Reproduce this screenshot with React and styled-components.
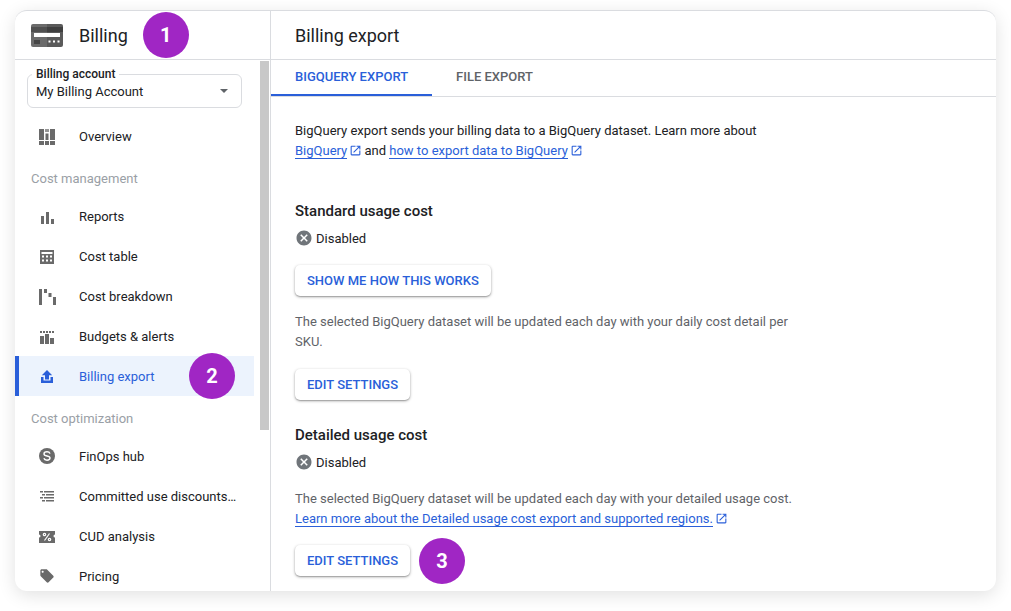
import React from "react";
import styled, { createGlobalStyle } from "styled-components";
import { MdCancel, MdOpenInNew, MdLocalOffer } from "react-icons/md";

const BLUE = "#2a5fd9";
const GRAY = "#5f6368";

const GlobalStyle = createGlobalStyle`
  html, body {
    margin: 0;
    padding: 0;
    background: #fff;
    font-family: Roboto, "Liberation Sans", sans-serif;
    color: #202124;
    overflow: hidden;
  }
`;

const IconBox = ({ color = "#6a6a6a", children }) => (
  <svg width="24" height="24" viewBox="0 0 24 24" fill={color}>
    {children}
  </svg>
);

const OverviewIcon = () => (
  <IconBox>
    <rect x="4" y="5" width="5" height="11" />
    <rect x="4" y="17" width="5" height="4" />
    <rect x="10" y="5" width="4" height="3" opacity=".7" />
    <rect x="10.5" y="9.5" width="3" height="6.5" />
    <rect x="10" y="17" width="4" height="4" />
    <rect x="15" y="5" width="5" height="11" />
    <rect x="15" y="17" width="5" height="4" />
  </IconBox>
);

const ReportsIcon = () => (
  <IconBox>
    <rect x="6" y="12" width="3" height="8" />
    <rect x="11" y="8" width="3" height="12" />
    <rect x="16" y="15" width="3" height="5" />
  </IconBox>
);

const TableIcon = () => (
  <IconBox>
    <path d="M5 6h14v14H5z" />
    <g fill="#fff">
      <rect x="6.5" y="8" width="11" height="2" />
      <rect x="7" y="11.5" width="2" height="2" />
      <rect x="11" y="11.5" width="2" height="2" />
      <rect x="15" y="11.5" width="2" height="2" />
      <rect x="7" y="15.5" width="2" height="2" />
      <rect x="11" y="15.5" width="2" height="2" />
      <rect x="15" y="15.5" width="2" height="2" />
    </g>
  </IconBox>
);

const BreakdownIcon = () => (
  <IconBox>
    <rect x="4" y="5" width="3" height="16" />
    <rect x="9" y="5" width="3" height="4" />
    <rect x="13.5" y="9" width="3" height="4" />
    <rect x="18" y="13" width="3" height="8" />
  </IconBox>
);

const BudgetsIcon = () => (
  <IconBox>
    <g>
      <rect x="5" y="7" width="2" height="2" />
      <rect x="8" y="7" width="2" height="2" />
      <rect x="11" y="7" width="2" height="2" />
      <rect x="14" y="7" width="2" height="2" />
      <rect x="17" y="7" width="2" height="2" />
    </g>
    <rect x="5" y="12" width="4" height="8" />
    <rect x="10" y="10" width="4" height="10" />
    <rect x="15" y="14" width="4" height="6" />
  </IconBox>
);

const UploadIcon = () => (
  <IconBox color={BLUE}>
    <path d="M12 6l-5.200 5.200h3.200v4.300h4v-4.300h3.200z" />
    <path d="M6 13h2.500v3.500h7V13H18v6H6z" />
  </IconBox>
);

const DollarIcon = () => (
  <IconBox>
    <circle cx="12" cy="12" r="8" />
    <path
      d="M15 9.600c-.4-1.200-1.500-1.800-3-1.800-1.600 0-3 .8-3 2.100 0 2.900 6 1.300 6 4.200 0 1.300-1.400 2.100-3 2.100-1.500 0-2.700-.7-3.100-1.900"
      fill="none"
      stroke="#fff"
      strokeWidth="1.400"
    />
  </IconBox>
);

const ListIcon = () => (
  <IconBox>
    <rect x="5" y="7" width="3" height="1.500" />
    <rect x="9" y="7" width="10" height="1.500" />
    <rect x="7" y="10" width="3" height="1.500" />
    <rect x="11" y="10" width="8" height="1.500" />
    <rect x="5" y="13" width="3" height="1.500" />
    <rect x="9" y="13" width="10" height="1.500" />
    <rect x="7" y="16" width="3" height="1.500" />
    <rect x="11" y="16" width="8" height="1.500" />
  </IconBox>
);

const PercentIcon = () => (
  <IconBox>
    <path d="M4 7h16v3.500a1.500 1.500 0 0 0 0 3V19H4v-5.500a1.500 1.500 0 0 0 0-3z" />
    <g fill="none" stroke="#fff" strokeWidth="1.200">
      <path d="M14.500 9.500l-5 7" />
      <circle cx="9.500" cy="10.500" r="1.200" />
      <circle cx="14.500" cy="15.500" r="1.200" />
    </g>
  </IconBox>
);

const BillingLogo = () => (
  <svg width="32" height="23" viewBox="0 0 32 23">
    <path d="M2 0h14v23H2a2 2 0 0 1-2-2V2a2 2 0 0 1 2-2z" fill="#6b6b6b" />
    <path d="M16 0h14a2 2 0 0 1 2 2v19a2 2 0 0 1-2 2H16z" fill="#5a5a5a" />
    <rect y="3" width="16" height="5" fill="#505050" />
    <rect x="16" y="3" width="16" height="5" fill="#3f3f3f" />
    <rect x="3" y="9" width="26" height="4" fill="#fff" />
    <rect x="3" y="16" width="6" height="4" fill="#454545" />
    <g fill="#fff">
      <rect x="17.500" y="16.500" width="2" height="2" />
      <rect x="22" y="16.500" width="2" height="2" />
      <rect x="26.500" y="16.500" width="2" height="2" />
    </g>
  </svg>
);

const App = () => {
  return (
    <>
      <GlobalStyle />
      <Page>
        <Card>
          <Sidebar>
            <SideHeader>
              <BillingLogo />
              <SideTitle>Billing</SideTitle>
              <Badge $left="15px">1</Badge>
            </SideHeader>
            <SideBody>
              <NavColumn>
                <AccountField>
                  <AccountLabel>Billing account</AccountLabel>
                  <AccountValue>My Billing Account</AccountValue>
                  <Caret />
                </AccountField>
                <NavRow>
                  <OverviewIcon />
                  <NavText>Overview</NavText>
                </NavRow>
                <NavGroup>Cost management</NavGroup>
                <NavRow>
                  <ReportsIcon />
                  <NavText>Reports</NavText>
                </NavRow>
                <NavRow>
                  <TableIcon />
                  <NavText>Cost table</NavText>
                </NavRow>
                <NavRow>
                  <BreakdownIcon />
                  <NavText>Cost breakdown</NavText>
                </NavRow>
                <NavRow>
                  <BudgetsIcon />
                  <NavText>Budgets &amp; alerts</NavText>
                </NavRow>
                <NavRow $active>
                  <UploadIcon />
                  <NavText>Billing export</NavText>
                  <Badge $left="auto" $right="19px">2</Badge>
                </NavRow>
                <NavGroup>Cost optimization</NavGroup>
                <NavRow>
                  <DollarIcon />
                  <NavText>FinOps hub</NavText>
                </NavRow>
                <NavRow>
                  <ListIcon />
                  <NavText>Committed use discounts…</NavText>
                </NavRow>
                <NavRow>
                  <PercentIcon />
                  <NavText>CUD analysis</NavText>
                </NavRow>
                <NavRow>
                  <TagSlot>
                    <MdLocalOffer />
                  </TagSlot>
                  <NavText>Pricing</NavText>
                </NavRow>
              </NavColumn>
              <ScrollTrack>
                <ScrollThumb />
              </ScrollTrack>
            </SideBody>
          </Sidebar>
          <Main>
            <MainHeader>Billing export</MainHeader>
            <Tabs>
              <Tab $active>BIGQUERY EXPORT</Tab>
              <Tab>FILE EXPORT</Tab>
            </Tabs>
            <Content>
              <Paragraph>
                BigQuery export sends your billing data to a BigQuery dataset. Learn more about{" "}
                <DocLink>BigQuery</DocLink>
                <MdOpenInNew />
                {" "}and <DocLink>how to export data to BigQuery</DocLink>
                <MdOpenInNew />
              </Paragraph>

              <SectionTitle $top="40px">Standard usage cost</SectionTitle>
              <Status>
                <MdCancel />
                Disabled
              </Status>
              <ActionRow $top="17px">
                <ActionButton>SHOW ME HOW THIS WORKS</ActionButton>
              </ActionRow>
              <Paragraph $top="16px" $muted>
                The selected BigQuery dataset will be updated each day with your daily cost detail per SKU.
              </Paragraph>
              <ActionRow $top="17px">
                <ActionButton>EDIT SETTINGS</ActionButton>
              </ActionRow>

              <SectionTitle $top="25px">Detailed usage cost</SectionTitle>
              <Status>
                <MdCancel />
                Disabled
              </Status>
              <Paragraph $top="17px" $muted>
                The selected BigQuery dataset will be updated each day with your detailed usage cost.{" "}
                <DocLink>Learn more about the Detailed usage cost export and supported regions.</DocLink>
                <MdOpenInNew />
              </Paragraph>
              <ActionRow $top="16px">
                <ActionButton>EDIT SETTINGS</ActionButton>
                <Badge $left="9px">3</Badge>
              </ActionRow>
            </Content>
          </Main>
        </Card>
      </Page>
    </>
  );
};

export default App;

const Page = styled.div`
  height: 611px;
  box-sizing: border-box;
  padding: 10px 15px 20px;
  overflow: hidden;
`;

const Card = styled.div`
  height: 581px;
  box-sizing: border-box;
  display: flex;
  background: #fff;
  border-top: 1px solid #dadce0;
  border-radius: 12px;
  box-shadow: 0 4px 18px rgba(0, 0, 0, 0.12);
  overflow: hidden;
`;

const Sidebar = styled.aside`
  width: 256px;
  flex-shrink: 0;
  box-sizing: border-box;
  display: flex;
  flex-direction: column;
  border-right: 1px solid #dadce0;
`;

const SideHeader = styled.div`
  height: 49px;
  flex-shrink: 0;
  box-sizing: border-box;
  display: flex;
  align-items: center;
  padding: 0 0 0 16px;
  border-bottom: 1px solid #dadce0;
`;

const SideTitle = styled.div`
  margin-left: 16px;
  font-size: 18px;
`;

const Badge = styled.div`
  width: 46px;
  height: 46px;
  flex-shrink: 0;
  display: flex;
  align-items: center;
  justify-content: center;
  margin-left: ${(p) => p.$left || "0"};
  margin-right: ${(p) => p.$right || "0"};
  border-radius: 50%;
  background: #a026c4;
  color: #fff;
  font-size: 20px;
  font-weight: 700;
`;

const SideBody = styled.div`
  flex: 1;
  min-height: 0;
  display: flex;
`;

const NavColumn = styled.nav`
  flex: 1;
  min-width: 0;
  padding-top: 14px;
`;

const AccountField = styled.div`
  position: relative;
  height: 34px;
  box-sizing: border-box;
  margin: 0 12px 8px;
  padding: 9px 0 0 8px;
  border: 1px solid #dadce0;
  border-radius: 6px;
`;

const AccountLabel = styled.span`
  position: absolute;
  top: -7px;
  left: 4px;
  padding: 0 4px;
  background: #fff;
  font-size: 12px;
  font-weight: 500;
  line-height: 13px;
`;

const AccountValue = styled.div`
  font-size: 13px;
  line-height: 15px;
`;

const Caret = styled.span`
  position: absolute;
  top: 14px;
  right: 13px;
  border-left: 4px solid transparent;
  border-right: 4px solid transparent;
  border-top: 4px solid ${GRAY};
`;

const NavRow = styled.div`
  height: 40px;
  box-sizing: border-box;
  display: flex;
  align-items: center;
  padding-left: ${(p) => (p.$active ? "16px" : "20px")};
  border-left: ${(p) => (p.$active ? `4px solid ${BLUE}` : "0")};
  background: ${(p) => (p.$active ? "#ecf3fd" : "transparent")};
  color: ${(p) => (p.$active ? BLUE : "#202124")};
`;

const TagSlot = styled.span`
  width: 24px;
  height: 24px;
  display: flex;
  align-items: center;
  justify-content: center;
  color: #6a6a6a;
  font-size: 16px;
`;

const NavText = styled.span`
  margin-left: 20px;
  font-size: 13px;
  white-space: nowrap;
`;

const NavGroup = styled.div`
  height: 40px;
  box-sizing: border-box;
  padding: 15px 0 0 16px;
  color: #9aa0a6;
  font-size: 13px;
  line-height: 15px;
`;

const ScrollTrack = styled.div`
  width: 16px;
  flex-shrink: 0;
  padding: 1px 0 0 6px;
  box-sizing: border-box;
`;

const ScrollThumb = styled.div`
  width: 9px;
  height: 369px;
  background: #c8c8c8;
`;

const Main = styled.main`
  flex: 1;
  min-width: 0;
  display: flex;
  flex-direction: column;
`;

const MainHeader = styled.div`
  height: 49px;
  flex-shrink: 0;
  box-sizing: border-box;
  display: flex;
  align-items: center;
  padding-left: 24px;
  border-bottom: 1px solid #dadce0;
  font-size: 18px;
`;

const Tabs = styled.div`
  height: 37px;
  flex-shrink: 0;
  box-sizing: border-box;
  display: flex;
  border-bottom: 1px solid #dadce0;
`;

const Tab = styled.div`
  height: 36px;
  box-sizing: border-box;
  display: flex;
  align-items: center;
  padding: 0 24px 1px;
  border-bottom: 2px solid ${(p) => (p.$active ? BLUE : "transparent")};
  color: ${(p) => (p.$active ? BLUE : GRAY)};
  font-size: 13px;
  font-weight: 500;
`;

const Content = styled.div`
  padding: 24px 0 0 24px;
`;

const Paragraph = styled.p`
  width: 510px;
  margin: ${(p) => p.$top || "0"} 0 0;
  color: ${(p) => (p.$muted ? "#5f6368" : "#202124")};
  font-size: 13px;
  line-height: 20px;

  svg {
    margin: 0 -1px 0 2px;
    color: ${BLUE};
    font-size: 13px;
    vertical-align: -2px;
  }
`;

const DocLink = styled.a`
  color: ${BLUE};
  border-bottom: 1px solid ${BLUE};
`;

const SectionTitle = styled.h3`
  margin: ${(p) => p.$top || "0"} 0 0;
  font-size: 15px;
  font-weight: 500;
  line-height: 20px;
`;

const Status = styled.div`
  display: flex;
  align-items: center;
  margin-top: 7px;
  height: 20px;
  font-size: 13px;

  svg {
    margin: 0 3px 0 0;
    color: #70757a;
    font-size: 18px;
  }
`;

const ActionRow = styled.div`
  height: 31px;
  display: flex;
  align-items: center;
  margin-top: ${(p) => p.$top || "0"};
`;

const ActionButton = styled.button`
  height: 31px;
  padding: 0 12px;
  border: 0;
  border-radius: 5px;
  background: #fff;
  box-shadow: 0 1px 3px rgba(0, 0, 0, 0.35), 0 1px 1px rgba(0, 0, 0, 0.15);
  color: ${BLUE};
  font-family: inherit;
  font-size: 13px;
  font-weight: 500;
`;
